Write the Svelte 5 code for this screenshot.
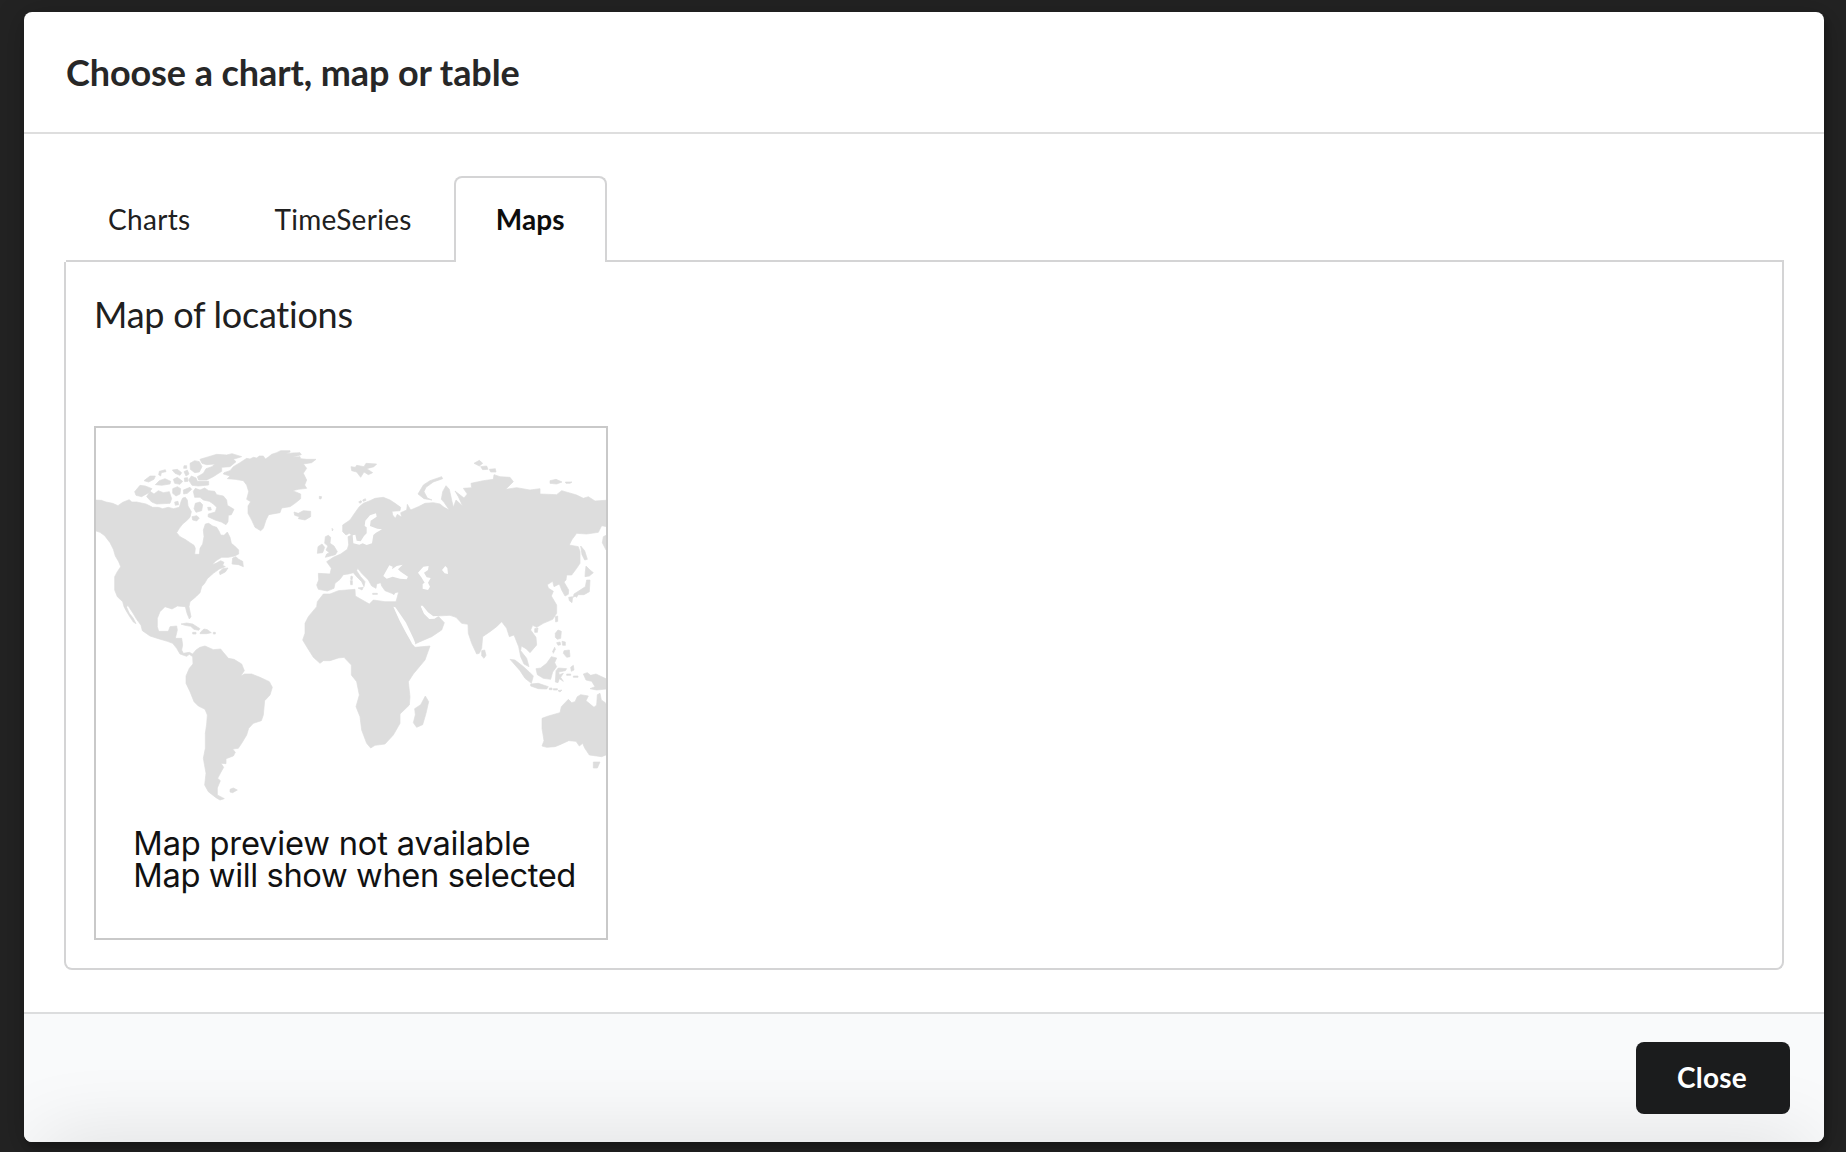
<script>
  const tabs = ['Charts', 'TimeSeries', 'Maps'];
  let active = $state('Maps');

  const land = [
    // North America
    'M10 240L34 241 48 246 68 250 84 257 98 247 118 239 125 246 140 246 168 252 188 262 205 262 218 266 235 262 250 266 268 262 274 242 278 234 286 232 292 240 294 258 304 275 300 292 290 302 278 312 268 325 260 338 270 350 285 358 300 368 312 376 316 385 314 403 328 403 330 385 338 372 342 350 340 330 346 312 356 310 368 318 380 322 388 335 392 345 402 346 412 336 420 352 424 370 434 378 446 390 446 402 434 408 415 412 395 412 378 422 366 434 378 430 392 422 402 427 398 436 406 440 388 447 370 460 352 476 344 490 335 500 330 518 318 530 300 545 297 560 303 590 298 597 291 580 286 560 262 558 246 567 225 560 210 575 202 595 202 620 206 634 235 634 240 620 260 618 262 630 256 655 275 655 278 675 275 690 280 700 298 697 308 702 318 690 330 682 345 678 370 689 392 687 400 697 415 715 432 718 455 732 463 752 452 768 464 762 485 762 510 772 538 785 547 802 540 825 524 842 520 885 514 902 490 910 476 925 470 945 455 970 445 985 428 987 436 997 430 1008 408 1016 408 1031 393 1030 401 1042 392 1058 383 1075 391 1082 382 1104 382 1125 403 1136 390 1140 378 1133 355 1115 344 1095 348 1060 340 1015 346 985 346 940 350 912 352 885 345 868 325 858 312 845 300 815 288 790 288 768 298 745 309 732 308 710 298 703 290 709 270 702 260 685 248 670 232 664 205 656 180 648 157 632 153 616 140 598 128 578 113 555 110 562 118 580 130 595 138 611 130 606 118 588 110 575 102 560 98 545 82 530 74 510 74 470 82 455 92 440 86 425 76 408 70 388 60 368 44 347 30 337 10 330Z',
    // Canadian Arctic
    'M134 215L150 196 166 198 186 206 176 218 155 230 138 226Z', 'M162 182L180 168 196 168 192 178 176 186Z',
    'M196 194L208 182 225 176 242 184 240 192 215 196Z', 'M208 154L226 149 228 155 214 158 212 168 206 164Z',
    'M170 230L180 214 192 222 205 212 220 218 238 215 245 236 240 250 200 252 185 246Z',
    'M247 150L262 148 275 158 270 166 255 160Z', 'M250 178L262 172 278 184 270 193 254 190Z', 'M282 137h8v8h-9z',
    'M282 155L292 150 297 162 288 168Z', 'M283 174L293 173 294 184 284 185Z', 'M300 130L314 122 328 125 336 140 328 156 314 158 301 148Z',
    'M330 118L356 110 380 103 410 105 426 101 455 110 430 118 438 125 420 140 395 142 395 154 370 170 350 180 326 180 322 170 340 160 348 146 366 140 374 132 350 134 336 130Z',
    'M296 180L304 168 318 174 322 184 356 184 356 195 325 198 306 196Z', 'M248 206L262 200 272 206 270 222 258 228 248 220Z',
    'M280 210L300 202 305 208 292 220 281 222Z', 'M254 246L264 244 266 254 256 256Z',
    'M310 214L316 205 330 210 344 204 356 212 374 214 380 224 400 228 410 240 412 256 432 268 424 284 415 286 414 305 408 314 394 306 375 300 354 290 355 282 376 276 380 262 370 252 358 244 340 240 330 232 314 232Z',
    'M316 250L330 246 338 254 335 272 318 277 312 266Z', 'M306 290L320 287 328 294 320 303 308 300Z', 'M353 262L362 262 364 270 355 271Z',
    'M428 414L438 410 446 418 458 424 460 440 446 434 426 432Z', 'M388 456L398 446 414 444 406 456 390 464Z',
    // Caribbean
    'M273 612L290 609 308 612 330 626 326 631 312 628 302 619 285 616Z', 'M332 636L342 627 352 629 364 638 350 641 330 641Z', 'M308 637h10v5h-10zM370 637h6v5h-6z', 'M420 1108L430 1104 442 1110 428 1118 420 1116Z',
    // Greenland and Iceland
    'M402 158L420 152 430 140 450 128 470 115 480 117 490 112 500 114 508 108 520 108 526 117 534 112 545 103 560 98 572 92 600 92 600 96 586 101 608 99 630 98 634 104 606 112 630 110 632 116 650 118 678 118 665 128 640 132 650 145 640 160 650 180 644 195 650 205 625 208 608 212 632 222 632 236 615 250 600 260 575 264 570 278 536 284 528 300 520 325 512 332 495 322 485 300 474 280 474 258 482 245 470 238 476 215 470 195 460 182 435 178 412 176 420 168 400 162Z',
    'M612 276L625 280 640 272 662 274 662 290 645 300 625 296 628 290 614 286Z', 'M688 229L695 230 693 237 688 236Z',
    // Eurasia and Africa
    'M685 460L720 462 724 445 710 425 730 412 752 402 772 388 776 374 774 350 785 345 778 340 768 345 758 335 758 315 780 300 795 278 808 260 820 250 840 242 855 235 880 232 900 240 915 250 932 262 930 272 906 274 908 285 916 295 922 283 935 292 932 278 950 270 952 253 962 270 985 260 1005 250 1030 248 1050 252 1062 262 1078 270 1062 247 1054 238 1058 215 1068 197 1078 208 1085 240 1090 262 1098 240 1118 258 1105 230 1095 213 1122 234 1132 222 1120 205 1145 203 1143 190 1180 182 1210 178 1212 164 1230 170 1260 172 1270 185 1247 208 1280 203 1320 210 1350 206 1350 222 1400 224 1415 212 1460 225 1480 235 1495 230 1515 243 1560 240 1560 322 1535 317 1525 337 1490 342 1460 340 1445 360 1438 375 1465 380 1470 395 1470 430 1460 445 1445 465 1430 465 1428 480 1422 486 1436 510 1435 523 1425 528 1415 510 1408 492 1392 500 1388 484 1372 494 1375 504 1390 514 1384 528 1400 555 1400 580 1388 598 1360 610 1340 622 1328 616 1322 630 1338 652 1340 675 1320 698 1308 686 1294 678 1292 692 1310 715 1317 740 1302 732 1292 710 1286 680 1272 645 1258 650 1250 625 1235 605 1220 620 1200 635 1178 650 1175 685 1168 700 1160 702 1145 670 1135 640 1134 613 1115 610 1098 592 1080 586 1040 588 1028 590 1010 576 995 558 992 560 1002 580 1018 596 1034 594 1046 590 1063 608 1055 630 1025 650 990 665 975 672 968 660 945 615 912 562 930 602 950 640 966 672 975 682 1020 678 1005 720 970 762 955 785 960 830 958 855 930 882 930 910 910 945 885 972 855 976 842 984 830 970 815 930 810 890 798 860 808 825 800 785 784 765 784 735 762 712 745 714 720 722 700 722 690 730 670 712 650 680 638 660 645 640 645 610 655 590 680 560 682 545 700 522 720 522 745 512 795 508 796 528 838 552 850 540 885 545 918 545 926 516 905 520 885 512 875 498 872 488 860 492 858 505 845 498 835 480 815 460 803 445 800 452 812 470 825 485 822 500 815 485 800 470 790 458 775 462 760 464 750 478 735 490 732 505 712 513 685 508 680 495 686 480Z',
    // British Isles
    'M706 350L715 346 722 352 720 370 732 378 742 395 736 404 706 412 710 402 718 398 708 390 714 378 704 370Z', 'M684 380L696 372 704 382 698 398 682 400Z', 'M726 325L729 328 727 333Z',
    // Norwegian coast
    'M806 246l6-4 4 3-6 5zM818 240l8-4 2 5-8 3z',
    // Svalbard and the Russian Arctic
    'M783 140L796 142 800 136 822 140 828 130 860 132 852 140 830 146 848 158 835 164 822 156 812 172 800 156 785 152Z',
    'M984 222L1000 195 1020 182 1055 170 1058 176 1030 186 1008 202 1002 215 1012 234 1026 240 1002 236Z',
    'M1152 130L1168 121 1178 130 1168 138Z', 'M1172 140L1190 138 1194 148 1178 149Z', 'M1198 148L1216 146 1218 156 1202 156Z',
    'M1380 182L1398 178 1416 186 1400 192 1380 190Z', 'M1426 186L1446 186 1440 190 1428 190Z', 'M1560 340L1540 350 1537 368 1548 390 1560 395Z',
    // Mediterranean islands
    'M783 468l5 2-2 10-4-2zM781 482l6 0 0 12-5 0z', 'M804 504L820 502 816 510Z', 'M848 520h14v3h-14z', 'M906 520l10-4-4 8z',
    // Japan and Sakhalin
    'M1472 378L1484 392 1492 418 1484 420 1476 404Z', 'M1488 438L1500 450 1510 458 1498 468 1485 470 1486 455Z', 'M1490 480L1500 480 1498 515 1482 524 1462 524 1450 532 1452 522 1474 508 1486 500Z', 'M1436 532L1448 530 1446 548 1438 542ZM1452 526l12-2-4 8z',
    // South-east Asia
    'M1396 590L1403 588 1403 604 1397 606Z', 'M1334 626L1344 624 1342 637 1334 637Z', 'M1175 692L1184 690 1188 706 1182 715 1175 708Z',
    'M1260 718L1275 720 1298 738 1318 756 1330 768 1324 790 1305 775 1290 752 1275 735Z', 'M1322 792L1345 790 1375 800 1370 807 1345 806 1322 798Z',
    'M1338 746L1352 744 1370 730 1384 710 1400 714 1394 728 1400 740 1388 756 1382 778 1360 775 1342 764Z',
    'M1398 752L1405 744 1430 746 1426 752 1406 756 1408 764 1420 760 1412 772 1420 784 1408 776 1404 788 1396 786Z',
    'M1396 640L1404 630 1414 634 1412 655 1402 658 1396 652Z', 'M1400 668l10-2 2 8-8 2zM1416 664l10 2 0 10-8 0z', 'M1422 692L1438 690 1440 710 1430 712 1420 700Z', 'M1388 694l6-12 2 6-6 12z',
    'M1442 742l8-6 2 14-8 4zM1430 762h12v4h-12zM1450 768h14v4h-14zM1378 804h8v5h-8zM1390 806h12v4h-12zM1404 812l12-2-6 6z',
    'M1480 762L1492 758 1502 766 1518 762 1560 782 1560 806 1520 810 1500 806 1515 800 1505 784 1488 780Z',
    // Madagascar, Australia, Tasmania
    'M1006 828L1016 845 1008 880 998 914 980 922 970 908 976 884 974 866 992 854Z',
    'M1356 895L1375 888 1410 878 1414 860 1435 838 1445 848 1455 845 1462 830 1472 824 1495 828 1488 842 1512 862 1520 855 1522 824 1530 820 1534 840 1546 848 1560 880 1560 1000 1535 1010 1498 1005 1484 984 1478 970 1468 978 1458 964 1436 962 1410 974 1395 980 1370 982 1356 978 1362 962 1356 925Z',
    'M1510 1026L1530 1026 1522 1044 1510 1044Z'
  ];

  const seas = [
    // Baltic
    'M840 286L858 280 860 290 842 302 840 318 862 326 876 328 858 338 850 345 846 370 830 375 818 370 808 374 790 370 788 346 796 344 800 362 812 364 822 348 830 340 830 322 824 318 826 302Z',
    // Black Sea and Azov
    'M880 468L890 450 898 436 908 440 906 448 920 438 938 434 924 448 932 455 954 470 950 478 930 476 908 470 890 476Z',
    // Caspian and Aral
    'M984 458L1000 440 1016 438 1014 450 1002 458 1010 472 1022 474 1014 488 1020 500 1014 510 998 506 998 492 1004 488 994 472Z',
    'M1056 450L1066 438 1072 444 1074 462 1064 460Z',
    // Red Sea and Persian Gulf
    'M910 560L916 562 948 608 970 655 976 670 970 676 948 638 928 600Z',
    'M992 557L998 557 1014 577 1030 589 1044 588 1034 596 1018 597 1002 581Z'
  ];
</script>

<div class="page">
  <section class="modal" role="dialog" aria-labelledby="title">
    <header><h1 id="title">Choose a chart, map or table</h1></header>
    <div class="content">
      <nav>
        {#each tabs as tab}
          <button class="tab" class:active={tab === active} onclick={() => (active = tab)}>{tab}</button>
        {/each}
      </nav>
      <div class="panel">
        <h2>Map of locations</h2>
        <svg class="preview" viewBox="18 24 1530 1530">
          <g class="land">
            {#each land as d}<path {d} />{/each}
          </g>
          <g class="sea">
            {#each seas as d}<path {d} />{/each}
          </g>
          <text x="130" y="1306" textLength="1192">Map preview not available</text>
          <text x="130" y="1402" textLength="1329">Map will show when selected</text>
        </svg>
      </div>
    </div>
    <footer><button class="close">Close</button></footer>
  </section>
</div>

<style>
  :global(body) {
    background: #232323;
    overflow: hidden;
  }
  .page {
    box-sizing: border-box;
    height: 1152px;
    padding: 12px 22px 10px 24px;
    font-family: Lato, 'Liberation Sans', sans-serif;
    color: #202020;
  }
  .modal {
    display: flex;
    flex-direction: column;
    height: 1130px;
    border-radius: 8px;
    background: #fff;
    overflow: hidden;
    box-shadow: 2px 6px 6px rgba(0, 0, 0, 0.2), 2px 6px 30px 4px rgba(0, 0, 0, 0.2);
  }
  header {
    box-sizing: border-box;
    height: 122px;
    padding: 37px 42px;
    border-bottom: 2px solid #dedede;
  }
  h1, h2 {
    margin: 0;
    font-size: 36px;
    line-height: 46px;
  }
  h1 {
    color: #272727;
    letter-spacing: -0.09px;
  }
  h2 {
    font-weight: 400;
    letter-spacing: -0.25px;
    font-variant-ligatures: none;
  }
  .content {
    box-sizing: border-box;
    height: 878px;
    padding: 42px 40px;
  }
  nav {
    display: flex;
    height: 86px;
    box-sizing: border-box;
    margin-left: 2px;
    border-bottom: 2px solid #d4d4d5;
  }
  .tab {
    box-sizing: border-box;
    height: 86px;
    padding: 0 40px 2px;
    border: 2px solid transparent;
    border-bottom: 0;
    border-radius: 8px 8px 0 0;
    background: none;
    font: 28px Lato, sans-serif;
    letter-spacing: 0.3px;
    color: #202020;
  }
  .tab.active {
    border-color: #d4d4d5;
    background: #fff;
    font-weight: 700;
    letter-spacing: 0.1px;
    color: #0d0d0d;
  }
  .panel {
    box-sizing: border-box;
    height: 708px;
    padding: 29px 28px;
    border: 2px solid #d4d4d5;
    border-top: 0;
    border-radius: 0 0 8px 8px;
  }
  .preview {
    display: block;
    width: 510px;
    height: 510px;
    margin-top: 89px;
    border: 2px solid #c9c9c9;
  }
  .land { fill: #ddd; stroke: #ddd; stroke-width: 2; stroke-linejoin: round; }
  .sea { fill: #fff; }
  text { font: 98px Inter, sans-serif; fill: #111; }
  footer {
    position: relative;
    box-sizing: border-box;
    flex: 1;
    display: flex;
    justify-content: flex-end;
    align-items: flex-start;
    padding: 28px 34px;
    border-top: 2px solid #dcddde;
    background: #f9fafb;
  }
  footer::after {
    content: '';
    position: absolute;
    top: 100%;
    left: 16px;
    right: 16px;
    height: 60px;
    box-shadow: 0 0 80px rgba(0, 0, 0, 0.13);
  }
  .close {
    position: relative;
    z-index: 1;
    width: 154px;
    height: 72px;
    padding: 0 2px 2px 0;
    border: 0;
    border-radius: 8px;
    background: #1b1c1d;
    color: #fff;
    font: 700 28px Lato, sans-serif;
    letter-spacing: 0.2px;
  }
</style>
